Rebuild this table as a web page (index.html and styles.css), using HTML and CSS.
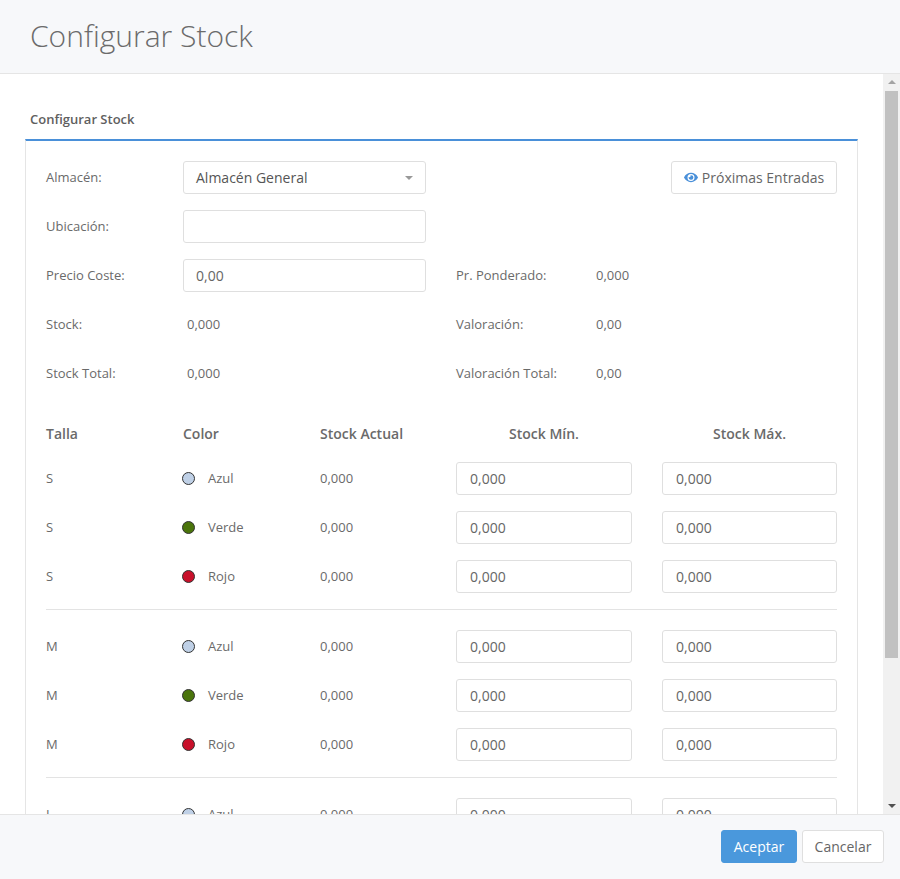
FILE: index.html
```html
<!DOCTYPE html>
<html lang="es">
<head>
<meta charset="utf-8">
<title>Configurar Stock</title>
<link rel="stylesheet" href="styles.css">
</head>
<body>
<div class="modal">
  <div class="modal-header">
    <h1 class="modal-title">Configurar Stock</h1>
  </div>
  <div class="modal-main">
    <div class="modal-body">
      <div class="panel-heading">Configurar Stock</div>
      <div class="panel">
        <div class="form-grid">
          <div class="lbl">Almacén:</div>
          <div class="select"><span>Almacén General</span><span class="caret"></span></div>
          <div class="spacer"></div>
          <div class="btn-wrap">
            <button class="btn-default btn-entradas"><svg class="eye" viewBox="0 0 576 512"><path d="M572.5 241.4C518.3 135.6 410.9 64 288 64S57.7 135.6 3.5 241.4a32.4 32.4 0 0 0 0 29.2C57.7 376.4 165.1 448 288 448s230.3-71.6 284.5-177.4a32.4 32.4 0 0 0 0-29.2zM288 400a144 144 0 1 1 144-144 143.9 143.9 0 0 1-144 144zm0-240a95.3 95.3 0 0 0-25.3 3.8 47.9 47.9 0 0 1-66.9 66.9A95.8 95.8 0 1 0 288 160z"/></svg>Próximas Entradas</button>
          </div>

          <div class="lbl">Ubicación:</div>
          <div class="input"></div>
          <div class="spacer"></div>
          <div class="spacer"></div>

          <div class="lbl">Precio Coste:</div>
          <div class="input">0,00</div>
          <div class="lbl">Pr. Ponderado:</div>
          <div class="val">0,000</div>

          <div class="lbl">Stock:</div>
          <div class="val">0,000</div>
          <div class="lbl">Valoración:</div>
          <div class="val">0,00</div>

          <div class="lbl">Stock Total:</div>
          <div class="val">0,000</div>
          <div class="lbl">Valoración Total:</div>
          <div class="val">0,00</div>
        </div>

        <div class="tgrid thead">
          <div>Talla</div>
          <div>Color</div>
          <div>Stock Actual</div>
          <div class="center">Stock Mín.</div>
          <div class="center">Stock Máx.</div>
        </div>

        <div class="tgrid group">
          <div class="val">S</div>
          <div class="val color"><span class="dot dot-azul"></span>Azul</div>
          <div class="val">0,000</div>
          <div class="input">0,000</div>
          <div class="input">0,000</div>

          <div class="val">S</div>
          <div class="val color"><span class="dot dot-verde"></span>Verde</div>
          <div class="val">0,000</div>
          <div class="input">0,000</div>
          <div class="input">0,000</div>

          <div class="val">S</div>
          <div class="val color"><span class="dot dot-rojo"></span>Rojo</div>
          <div class="val">0,000</div>
          <div class="input">0,000</div>
          <div class="input">0,000</div>
        </div>
        <hr class="sep">
        <div class="tgrid group">
          <div class="val">M</div>
          <div class="val color"><span class="dot dot-azul"></span>Azul</div>
          <div class="val">0,000</div>
          <div class="input">0,000</div>
          <div class="input">0,000</div>

          <div class="val">M</div>
          <div class="val color"><span class="dot dot-verde"></span>Verde</div>
          <div class="val">0,000</div>
          <div class="input">0,000</div>
          <div class="input">0,000</div>

          <div class="val">M</div>
          <div class="val color"><span class="dot dot-rojo"></span>Rojo</div>
          <div class="val">0,000</div>
          <div class="input">0,000</div>
          <div class="input">0,000</div>
        </div>
        <hr class="sep">
        <div class="tgrid group">
          <div class="val">L</div>
          <div class="val color"><span class="dot dot-azul"></span>Azul</div>
          <div class="val">0,000</div>
          <div class="input">0,000</div>
          <div class="input">0,000</div>

          <div class="val">L</div>
          <div class="val color"><span class="dot dot-verde"></span>Verde</div>
          <div class="val">0,000</div>
          <div class="input">0,000</div>
          <div class="input">0,000</div>
        </div>
      </div>
    </div>
    <div class="scrollbar">
      <span class="arrow-up"></span>
      <div class="track"><div class="thumb"></div></div>
      <span class="arrow-down"></span>
    </div>
  </div>
  <div class="modal-footer">
    <button class="btn-primary">Aceptar</button>
    <button class="btn-default">Cancelar</button>
  </div>
</div>
</body>
</html>
```
FILE: styles.css
```css
* { box-sizing: border-box; }
html, body { margin: 0; padding: 0; }
body {
  font-family: "Open Sans", "Liberation Sans", sans-serif;
  color: #666;
  background: #fff;
  width: 900px;
  height: 879px;
  overflow: hidden;
}
.modal { display: flex; flex-direction: column; height: 879px; }

.modal-header {
  height: 74px;
  background: #f7f8fa;
  border-bottom: 1px solid #e5e5e5;
  padding-left: 30px;
  display: flex;
  align-items: center;
  flex: none;
}
.modal-title {
  margin: 0;
  font-size: 30px;
  font-weight: 300;
  color: #6b6b6b;
  line-height: 1;
  padding-bottom: 1px;
}

.modal-main {
  height: 740px;
  display: flex;
  flex: none;
}
.modal-body {
  flex: 1;
  overflow: hidden;
  padding: 35px 25px 0 25px;
}
.panel-heading {
  font-size: 13px;
  font-weight: 600;
  color: #5f5f5f;
  line-height: 20px;
  padding: 0 0 10px 5px;
}
.panel {
  border-top: 2px solid #4a90d9;
  border-left: 1px solid #e5e5e5;
  border-right: 1px solid #e5e5e5;
  padding: 20px 20px 20px 20px;
}

.form-grid {
  display: grid;
  grid-template-columns: 137px 243px 166px 1fr;
  grid-template-rows: repeat(5, 33px);
  row-gap: 16px;
  column-gap: 0;
}
.form-grid > div:nth-child(4n+3) { margin-left: 30px; }
.lbl, .val {
  font-size: 13px;
  display: flex;
  align-items: center;
  height: 33px;
  padding-bottom: 1px;
  color: #6a6a6a;
}
.form-grid .val { padding-left: 4px; }
.btn-wrap { display: flex; justify-content: flex-end; }

.input, .select {
  height: 33px;
  border: 1px solid #dfdfdf;
  border-radius: 3px;
  background: #fff;
  font-size: 14px;
  color: #666;
  padding-left: 12px;
  display: flex;
  align-items: center;
}
.select { justify-content: space-between; padding-right: 12px; color: #555; }
.caret {
  width: 0; height: 0;
  border-left: 4px solid transparent;
  border-right: 4px solid transparent;
  border-top: 4px solid #999;
}

button {
  font-family: inherit;
  font-size: 14px;
  height: 33px;
  border-radius: 3px;
  cursor: pointer;
  white-space: nowrap;
}
.btn-default {
  background: #fff;
  border: 1px solid #dfdfdf;
  color: #666;
  padding: 0 12px;
}
.btn-entradas {
  display: flex;
  align-items: center;
  width: 166px;
  padding: 0;
  justify-content: center;
}
.eye { width: 14px; height: 13px; fill: #4a90d9; margin-right: 4px; flex: none; }

.tgrid {
  display: grid;
  grid-template-columns: 107px 107px 106px 176px 1fr;
  column-gap: 30px;
}
.thead {
  margin-top: 34px;
  margin-bottom: 18px;
  font-size: 14px;
  font-weight: 600;
  color: #6a6a6a;
  line-height: 20px;
}
.center { text-align: center; }
.group { row-gap: 16px; }
.group .input { padding-left: 13px; }
.dot {
  width: 13px; height: 13px;
  border-radius: 50%;
  border: 1px solid #333;
  margin-left: -1px;
  margin-right: 13px;
  flex: none;
}
.dot-azul { background: #bfd0e6; }
.dot-verde { background: #4a740b; }
.dot-rojo { background: #c8102a; }

.sep {
  border: 0;
  border-top: 1px solid #e3e3e3;
  margin: 16px 0 20px 0;
  height: 0;
}

.scrollbar {
  width: 17px;
  flex: none;
  background: #f1f1f1;
  display: flex;
  flex-direction: column;
  align-items: center;
}
.arrow-up, .arrow-down {
  width: 0; height: 0;
  border-left: 4px solid transparent;
  border-right: 4px solid transparent;
  flex: none;
}
.arrow-up { border-bottom: 4px solid #a3a3a3; margin: 6px 0 7px; }
.arrow-down { border-top: 4px solid #505050; margin: 6px 0 6px; }
.track { flex: 1; width: 100%; padding: 0 2px 0 2px; }
.thumb { height: 567px; background: #c1c1c1; }

.modal-footer {
  flex: 1;
  background: #f7f8fa;
  border-top: 1px solid #e5e5e5;
  display: flex;
  justify-content: flex-end;
  align-items: flex-start;
  padding: 15px 16px 0 0;
  gap: 5px;
}
.btn-primary {
  background: #4a98dc;
  border: 1px solid #4a98dc;
  color: #fff;
  width: 76px;
  padding: 0;
}
.modal-footer .btn-default { width: 82px; padding: 0; }
```
